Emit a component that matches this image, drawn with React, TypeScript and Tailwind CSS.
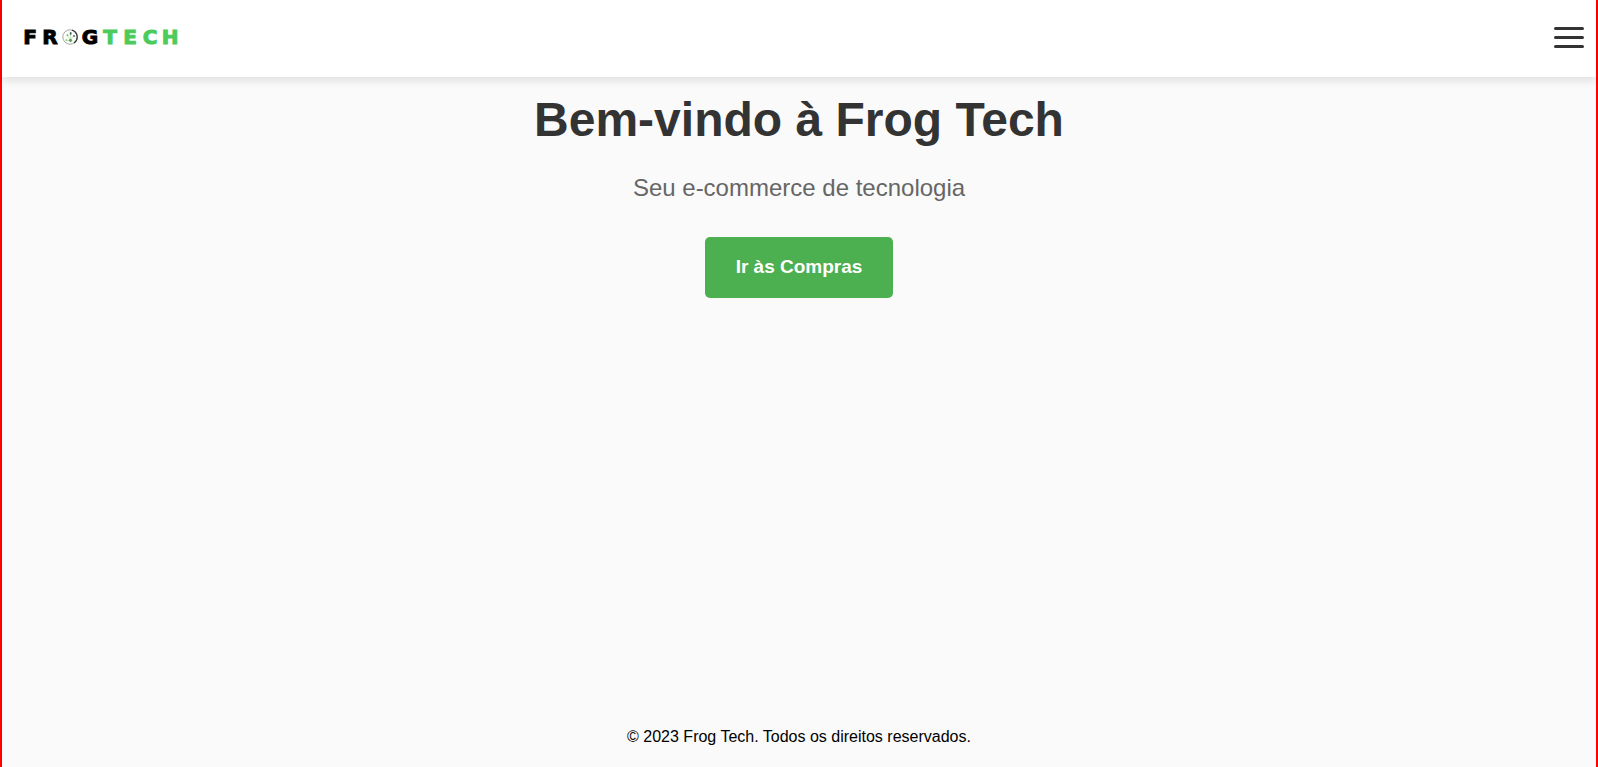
function FrogEmblem() {
  return (
    <svg viewBox="0 0 16 16" className="size-4" aria-hidden="true">
      <circle cx="8" cy="8" r="7.200" fill="#fcfefc" stroke="#a3aaa5" strokeWidth="1" />
      <path d="M10 1.100a7.200 7.200 0 0 1 2 12.900" fill="none" stroke="#303632" strokeWidth="1.200" />
      <path d="M8.500 11V5M8.500 10l3-2.500M8.500 11L5.500 7M8 11.500H4" fill="none" stroke="#b5dcb8" strokeWidth="0.700" />
      <ellipse cx="8.700" cy="4.500" rx="0.900" ry="1.400" fill="#3f6a55" />
      <circle cx="5.500" cy="6.300" r="1" fill="#7fb573" />
      <circle cx="12" cy="7" r="1" fill="#4d7a64" />
      <circle cx="8.500" cy="11.300" r="1.600" fill="#5fa548" />
      <circle cx="4.300" cy="11" r="0.900" fill="#9ccb86" />
    </svg>
  );
}

function Logo() {
  return (
    <a
      href="#"
      aria-label="Frog Tech"
      className="grid grid-cols-[repeat(8,20px)] items-center justify-items-center font-['DejaVu_Sans',sans-serif] text-xl leading-6 font-bold text-black [-webkit-text-stroke:1px_currentColor]"
    >
      <span>F</span>
      <span>R</span>
      <FrogEmblem />
      <span>G</span>
      <span className="text-[#4ccb5c]">T</span>
      <span className="text-[#4ccb5c]">E</span>
      <span className="text-[#4ccb5c]">C</span>
      <span className="text-[#4ccb5c]">H</span>
    </a>
  );
}

export default function App() {
  return (
    <div className="flex min-h-screen flex-col border-x-2 border-[#ff0000] bg-[#fafafa] font-['Liberation_Sans',Arial,sans-serif] text-[#333333]">
      <header className="flex items-center justify-between bg-white pt-6 pr-3 pb-7 pl-[18px] shadow-[0_4px_8px_rgba(0,0,0,0.1)]">
        <Logo />
        <button type="button" aria-label="Menu" className="flex h-[25px] cursor-pointer flex-col justify-end gap-[6px] pb-px">
          <span className="h-[3px] w-[30px] rounded-full bg-[#333333]" />
          <span className="h-[3px] w-[30px] rounded-full bg-[#333333]" />
          <span className="h-[3px] w-[30px] rounded-full bg-[#333333]" />
        </button>
      </header>
      <main className="flex grow flex-col items-center px-5 pt-4 text-center">
        <h1 className="text-5xl leading-[54px] font-bold">Bem-vindo à Frog Tech</h1>
        <p className="mt-[27px] text-2xl leading-7 text-[#666666]">Seu e-commerce de tecnologia</p>
        <a
          href="#"
          className="mt-[35px] rounded-[5px] bg-[#4caf50] px-[31px] pt-[19px] pb-5 text-[19px] leading-[22px] font-bold text-white"
        >
          Ir às Compras
        </a>
      </main>
      <footer className="px-5 pt-5 pb-[21px] text-center text-base leading-[18px] text-black">
        <p>© 2023 Frog Tech. Todos os direitos reservados.</p>
      </footer>
    </div>
  );
}
